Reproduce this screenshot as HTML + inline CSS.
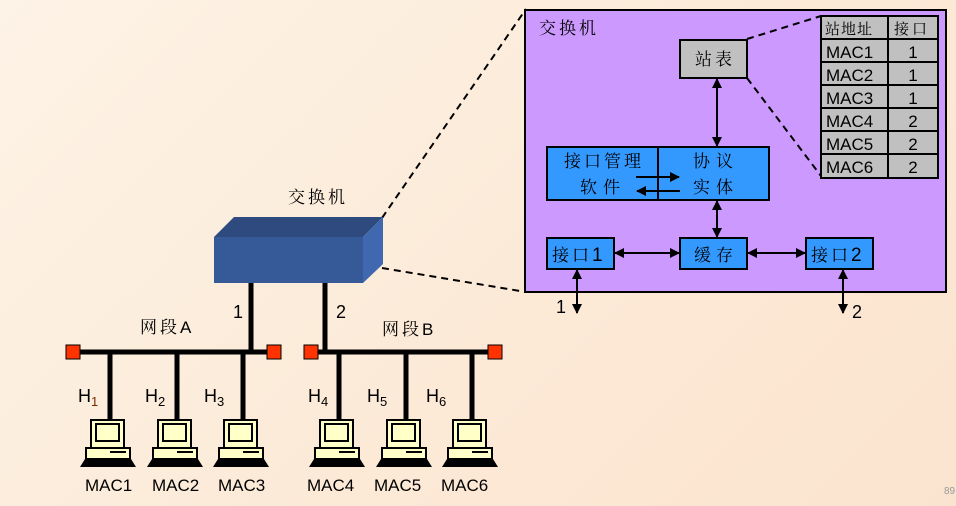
<!DOCTYPE html>
<html><head><meta charset="utf-8"><style>
html,body{margin:0;padding:0}
body{width:956px;height:506px;overflow:hidden;background:linear-gradient(135deg,#fdf3e6 0%,#fce9d6 60%,#fbe4cf 100%);}
svg{display:block}
text{font-family:"Liberation Sans","Noto Serif CJK SC","Noto Sans CJK SC",sans-serif;}
.cn{font-family:"Noto Serif CJK SC","WenQuanYi Zen Hei","Noto Sans CJK SC",serif;letter-spacing:3px;}
</style></head><body>
<svg width="956" height="506" viewBox="0 0 956 506">
<defs>
<marker id="a" viewBox="0 0 10 10" refX="9" refY="5" markerWidth="5" markerHeight="5" orient="auto-start-reverse"><path d="M0,0L10,5L0,10z" fill="#000"/></marker>
<g id="pc">
<rect x="11" y="0" width="33" height="28" fill="#ffffc8" stroke="#000" stroke-width="2"/>
<rect x="16" y="4" width="23" height="17" fill="#ffffc8" stroke="#000" stroke-width="2"/>
<rect x="6" y="28" width="44" height="11" fill="#ffffc8" stroke="#000" stroke-width="2"/>
<line x1="30" y1="32" x2="46" y2="32" stroke="#000" stroke-width="2"/>
<path d="M5,39 L51,39 L56,47 L0,47 Z" fill="#000"/>
</g>
</defs>
<line x1="382" y1="218" x2="526" y2="9" stroke="#000" stroke-width="2" stroke-dasharray="7,5"/>
<line x1="382" y1="268" x2="526" y2="292" stroke="#000" stroke-width="2" stroke-dasharray="7,5"/>
<rect x="525" y="10" width="421" height="282" fill="#cc99ff" stroke="#000" stroke-width="2"/>
<text x="539" y="34" class="cn" font-size="17">交换机</text>
<line x1="747" y1="39" x2="821" y2="16" stroke="#000" stroke-width="2" stroke-dasharray="7,5"/>
<line x1="747" y1="78" x2="821" y2="176" stroke="#000" stroke-width="2" stroke-dasharray="7,5"/>
<g stroke="#000" stroke-width="2" fill="#c0c0c0">
<rect x="821" y="16" width="117" height="162"/>
<line x1="888" y1="16" x2="888" y2="178"/>
<line x1="821" y1="39" x2="938" y2="39"/><line x1="821" y1="62" x2="938" y2="62"/><line x1="821" y1="85" x2="938" y2="85"/><line x1="821" y1="108" x2="938" y2="108"/><line x1="821" y1="131" x2="938" y2="131"/><line x1="821" y1="154" x2="938" y2="154"/>
</g>
<g font-size="17" fill="#000">
<text x="825" y="34" class="cn" font-size="15" style="letter-spacing:1px">站地址</text><text x="894" y="34" class="cn" font-size="15">接口</text>
<text x="826" y="58">MAC1</text><text x="913" y="58" text-anchor="middle">1</text>
<text x="826" y="81">MAC2</text><text x="913" y="81" text-anchor="middle">1</text>
<text x="826" y="104">MAC3</text><text x="913" y="104" text-anchor="middle">1</text>
<text x="826" y="127">MAC4</text><text x="913" y="127" text-anchor="middle">2</text>
<text x="826" y="150">MAC5</text><text x="913" y="150" text-anchor="middle">2</text>
<text x="826" y="173">MAC6</text><text x="913" y="173" text-anchor="middle">2</text>
</g>
<rect x="680" y="40" width="67" height="38" fill="#c0c0c0" stroke="#000" stroke-width="2"/>
<text x="715" y="65" class="cn" font-size="17" text-anchor="middle">站表</text>
<rect x="547" y="147" width="222" height="53" fill="#3399ff" stroke="#000" stroke-width="2"/>
<line x1="658" y1="147" x2="658" y2="200" stroke="#000" stroke-width="2"/>
<text x="604" y="167" class="cn" font-size="17" text-anchor="middle">接口管理</text>
<text x="603" y="193" class="cn" font-size="17" text-anchor="middle" style="letter-spacing:6px">软件</text>
<text x="716" y="167" class="cn" font-size="17" text-anchor="middle" style="letter-spacing:6px">协议</text>
<text x="716" y="193" class="cn" font-size="17" text-anchor="middle" style="letter-spacing:6px">实体</text>
<line x1="636" y1="177" x2="679" y2="177" stroke="#000" stroke-width="2" marker-end="url(#a)"/>
<line x1="680" y1="191" x2="637" y2="191" stroke="#000" stroke-width="2" marker-end="url(#a)"/>
<rect x="547" y="238" width="67" height="31" fill="#3399ff" stroke="#000" stroke-width="2"/>
<text x="552" y="261" class="cn" font-size="17">接口<tspan font-family="Liberation Sans" font-size="19">1</tspan></text>
<rect x="680" y="238" width="67" height="31" fill="#3399ff" stroke="#000" stroke-width="2"/>
<text x="716" y="261" class="cn" font-size="17" text-anchor="middle" style="letter-spacing:5px">缓存</text>
<rect x="806" y="238" width="67" height="31" fill="#3399ff" stroke="#000" stroke-width="2"/>
<text x="811" y="261" class="cn" font-size="17">接口<tspan font-family="Liberation Sans" font-size="19">2</tspan></text>
<g stroke="#000" stroke-width="2" marker-start="url(#a)" marker-end="url(#a)">
<line x1="717" y1="79" x2="717" y2="146"/>
<line x1="717" y1="201" x2="717" y2="237"/>
<line x1="615" y1="253" x2="679" y2="253"/>
<line x1="748" y1="253" x2="805" y2="253"/>
<line x1="577" y1="270" x2="577" y2="313"/>
<line x1="843" y1="270" x2="843" y2="313"/>
</g>
<text x="556" y="313" font-size="18">1</text>
<text x="852" y="318" font-size="18">2</text>
<text x="318" y="203" class="cn" font-size="17" text-anchor="middle">交换机</text>
<path d="M214,237 L234,217 L383,217 L363,237 Z" fill="#2e4a7e"/>
<path d="M363,237 L383,217 L383,264 L363,283 Z" fill="#4068b0"/>
<rect x="214" y="237" width="149" height="46" fill="#365a98"/>
<g stroke="#000" stroke-width="5">
<line x1="251" y1="283" x2="251" y2="352"/>
<line x1="325" y1="283" x2="325" y2="352"/>
<line x1="73" y1="352" x2="274" y2="352"/>
<line x1="311" y1="352" x2="495" y2="352"/>
<line x1="110" y1="352" x2="110" y2="421"/>
<line x1="177" y1="352" x2="177" y2="421"/>
<line x1="243" y1="352" x2="243" y2="421"/>
<line x1="339" y1="352" x2="339" y2="421"/>
<line x1="406" y1="352" x2="406" y2="421"/>
<line x1="472" y1="352" x2="472" y2="421"/>
</g>
<g fill="#ff3300" stroke="#000" stroke-width="1">
<rect x="66" y="345" width="14" height="14"/><rect x="267" y="345" width="14" height="14"/>
<rect x="304" y="345" width="14" height="14"/><rect x="488" y="345" width="14" height="14"/>
</g>
<text x="233" y="318" font-size="18">1</text>
<text x="336" y="318" font-size="18">2</text>
<text x="140" y="333" font-size="17"><tspan class="cn">网段</tspan>A</text>
<text x="382" y="335" font-size="17"><tspan class="cn">网段</tspan>B</text>
<g font-size="18">
<text x="78" y="402">H<tspan font-size="13" dy="4" fill="#7a2a00">1</tspan></text>
<text x="145" y="402">H<tspan font-size="13" dy="4">2</tspan></text>
<text x="204" y="402">H<tspan font-size="13" dy="4">3</tspan></text>
<text x="308" y="402">H<tspan font-size="13" dy="4">4</tspan></text>
<text x="367" y="402">H<tspan font-size="13" dy="4">5</tspan></text>
<text x="426" y="402">H<tspan font-size="13" dy="4">6</tspan></text>
</g>
<use href="#pc" x="80" y="420"/><use href="#pc" x="147" y="420"/><use href="#pc" x="213" y="420"/>
<use href="#pc" x="309" y="420"/><use href="#pc" x="376" y="420"/><use href="#pc" x="442" y="420"/>
<g font-size="17">
<text x="85" y="491">MAC1</text><text x="152" y="491">MAC2</text><text x="218" y="491">MAC3</text>
<text x="307" y="491">MAC4</text><text x="374" y="491">MAC5</text><text x="441" y="491">MAC6</text>
</g>
<text x="944" y="494" font-size="10" fill="#999">89</text>
</svg>
</body></html>
